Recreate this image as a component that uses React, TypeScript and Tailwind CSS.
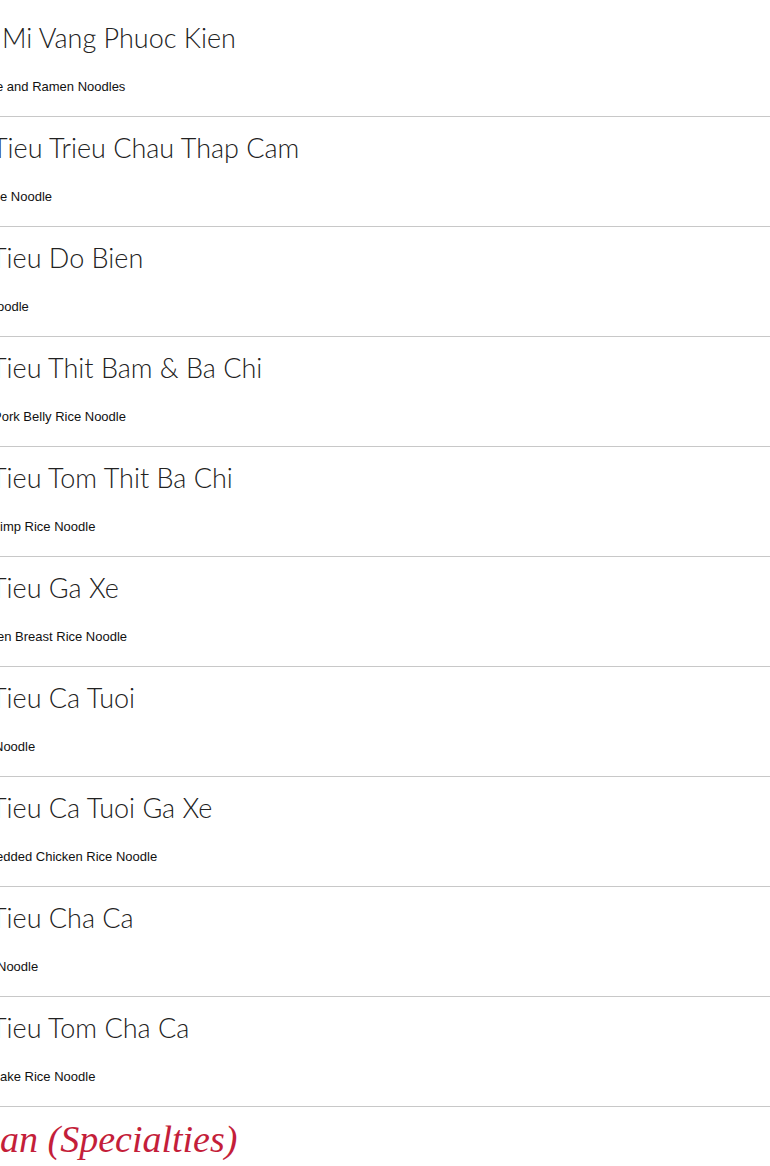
import React from 'react';

type Dish = { name: string; note: string; nameShift: number; noteShift: number };

// the menu column runs off the left edge of the window, so each line keeps
// only what is visible, nudged left so cut letters fall on the edge
const dishes: Dish[] = [
  { name: 'Mi Vang Phuoc Kien', note: 'e and Ramen Noodles', nameShift: 2, noteShift: -4 },
  { name: 'Tieu Trieu Chau Thap Cam', note: 'e Noodle', nameShift: -8, noteShift: 0 },
  { name: 'Tieu Do Bien', note: 'oodle', nameShift: -9, noteShift: -3 },
  { name: 'Tieu Thit Bam & Ba Chi', note: 'Pork Belly Rice Noodle', nameShift: -9, noteShift: -7 },
  { name: 'Tieu Tom Thit Ba Chi', note: 'imp Rice Noodle', nameShift: -9, noteShift: 0 },
  { name: 'Tieu Ga Xe', note: 'en Breast Rice Noodle', nameShift: -9, noteShift: -3 },
  { name: 'Tieu Ca Tuoi', note: 'Noodle', nameShift: -9, noteShift: -6 },
  { name: 'Tieu Ca Tuoi Ga Xe', note: 'edded Chicken Rice Noodle', nameShift: -9, noteShift: -4 },
  { name: 'Tieu Cha Ca', note: 'Noodle', nameShift: -9, noteShift: -3 },
  { name: 'Tieu Tom Cha Ca', note: 'ake Rice Noodle', nameShift: -9, noteShift: 0 },
];

function DishRow({ dish }: { dish: Dish }) {
  return (
    <div className="border-b border-[#c8c8c8] pt-[13px] pb-[19px]">
      <div
        className="whitespace-nowrap text-[27px] leading-[36px] font-light text-[#222222] [font-family:Lato,sans-serif]"
        style={{ marginLeft: dish.nameShift }}
      >
        {dish.name}
      </div>
      <div
        className="mt-[21px] whitespace-nowrap text-[13px] leading-[20px] text-[#111111] [font-family:'Liberation_Sans',Arial,sans-serif]"
        style={{ marginLeft: dish.noteShift }}
      >
        {dish.note}
      </div>
    </div>
  );
}

export default function App() {
  return (
    <div className="w-[770px] h-[1166px] overflow-hidden bg-white pt-[7px]">
      {dishes.map((d) => (
        <DishRow key={d.name} dish={d} />
      ))}
      <h2 className="pt-[10px] whitespace-nowrap text-[38px] leading-[44px] italic font-normal text-[#c41e3a] [font-family:'Liberation_Serif','Times_New_Roman',serif]">
        an (Specialties)
      </h2>
    </div>
  );
}
